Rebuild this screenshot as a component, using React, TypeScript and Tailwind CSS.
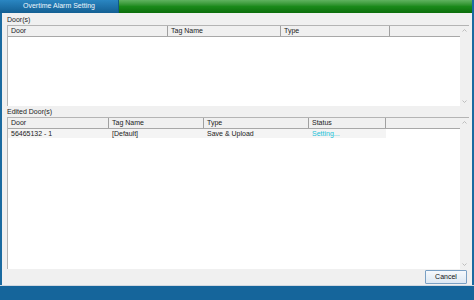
const FONT = "font-['Liberation_Sans',Arial,sans-serif]";

type Col = { label: string; width: string };

const DOOR_COLS: Col[] = [
  { label: "Door", width: "w-[160px]" },
  { label: "Tag Name", width: "w-[113px]" },
  { label: "Type", width: "w-[109px]" },
  { label: "", width: "w-[71px]" },
];

const EDITED_COLS: Col[] = [
  { label: "Door", width: "w-[101px]" },
  { label: "Tag Name", width: "w-[95px]" },
  { label: "Type", width: "w-[105px]" },
  { label: "Status", width: "w-[77px]" },
  { label: "", width: "w-[75px]" },
];

function Chevron({ up }: { up?: boolean }) {
  return (
    <svg width="5" height="3" viewBox="0 0 5 3" aria-hidden>
      <path
        d={up ? "M0.5 2.5 L2.5 0.5 L4.5 2.5" : "M0.5 0.5 L2.5 2.5 L4.5 0.5"}
        fill="none"
        stroke="#b8b8b8"
        strokeWidth="0.9"
      />
    </svg>
  );
}

function Scrollbar() {
  return (
    <div className="flex w-[9px] shrink-0 flex-col items-center justify-between bg-[#f0f0f0] py-[3px]">
      <Chevron up />
      <Chevron />
    </div>
  );
}

function Header({ cols }: { cols: Col[] }) {
  return (
    <div className="flex h-[11px] border-b border-[#a8a8a8] bg-[#f0f0f0]">
      {cols.map((c, i) => (
        <div
          key={i}
          className={`${c.width} shrink-0 border-r border-[#a0a0a0] pl-[3px] text-[7px] leading-[10px] text-[#222]`}
        >
          {c.label}
        </div>
      ))}
    </div>
  );
}

function Table({
  cols,
  height,
  children,
}: {
  cols: Col[];
  height: string;
  children?: React.ReactNode;
}) {
  return (
    <div className={`flex ${height} border-l border-t border-[#b4b4b4] bg-white`}>
      <div className="flex min-w-0 flex-1 flex-col overflow-hidden">
        <Header cols={cols} />
        {children}
      </div>
      <Scrollbar />
    </div>
  );
}

export default function App() {
  return (
    <div className={`flex h-[300px] w-[474px] flex-col bg-[#f0f0f0] ${FONT}`}>
      {/* Title strip */}
      <div className="flex h-[13px] shrink-0">
        <div className="flex w-[119px] items-center justify-center border-r border-[#0f5a86] bg-gradient-to-b from-[#2a86c2] to-[#135f93] text-[7px] text-[#eef6fc]">
          Overtime Alarm Setting
        </div>
        <div className="flex-1 bg-gradient-to-b from-[#5fb35f] via-[#1a8a1a] to-[#0b6e0b]" />
        <div className="w-[2px] bg-[#1a6aa0]" />
      </div>

      {/* Body */}
      <div className="flex flex-1 flex-col border-l-2 border-r-2 border-[#1a6aa0] pl-[5px] pr-[3px]">
        <div className="h-[12px] pt-[2px] text-[7px] leading-[9px] text-[#222]">Door(s)</div>
        <Table cols={DOOR_COLS} height="h-[81px]" />

        <div className="h-[11px] pt-[1px] text-[7px] leading-[9px] text-[#222]">Edited Door(s)</div>
        <Table cols={EDITED_COLS} height="h-[152px]">
          <div className="flex h-[9px] w-[378px] bg-[#f4f4f4] text-[7px] leading-[9px] text-[#222]">
            <div className="w-[101px] shrink-0 pl-[3px]">56465132 - 1</div>
            <div className="w-[95px] shrink-0 pl-[3px]">[Default]</div>
            <div className="w-[105px] shrink-0 pl-[3px]">Save &amp; Upload</div>
            <div className="w-[77px] shrink-0 pl-[3px] text-[#22c2d8]">Setting...</div>
          </div>
        </Table>

        <div className="flex h-[16px] items-center justify-end pr-[2px]">
          <button className="h-[14px] w-[42px] rounded-[1px] border border-[#7aa0c4] bg-gradient-to-b from-[#f6f9fc] to-[#dde8f3] text-[7px] text-[#111]">
            Cancel
          </button>
        </div>
      </div>

      {/* Bottom strip */}
      <div className="h-[16px] shrink-0 border-t border-[#d0d8e0] bg-[#15659b]" />
    </div>
  );
}
